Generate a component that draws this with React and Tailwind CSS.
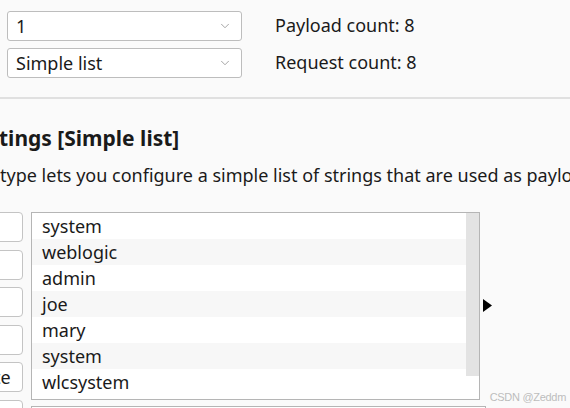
import { ChevronDown } from 'lucide-react';

const items = ['system', 'weblogic', 'admin', 'joe', 'mary', 'system', 'wlcsystem'];
const buttons = ['Paste', 'Load ...', 'Remove', 'Clear', 'Deduplicate', 'Add'];

function Select({ value }) {
  return (
    <div className="w-[235px] h-[30px] flex items-center justify-between pl-[8px] pr-[9px] bg-white border border-[#bdbdbd] rounded-[3px]">
      <span>{value}</span>
      <ChevronDown className="w-[14px] h-[14px] text-[#8a8a8a]" strokeWidth={1.3} />
    </div>
  );
}

export default function App() {
  return (
    <div
      className="relative w-[570px] h-[408px] overflow-hidden bg-[#fafafa] text-[18px] text-[#1a1a1a]"
      style={{ fontFamily: '"Noto Sans", "Open Sans", sans-serif' }}
    >
      {/* payload set / type */}
      <div className="flex items-start gap-[33px] pl-[7px] pt-[11px] h-[97px]">
        <div className="flex flex-col gap-[7px]">
          <Select value="1" />
          <Select value="Simple list" />
        </div>
        <div className="flex flex-col gap-[11px] pt-[1px] leading-[26px]">
          <span>Payload count: 8</span>
          <span>Request count: 8</span>
        </div>
      </div>
      <div className="h-[2px] bg-[#e0e0e0]" />

      {/* settings header */}
      <div className="pt-[25px] whitespace-nowrap">
        <h2 className="text-[21px] font-bold leading-[28px] -ml-[1px]">tings [Simple list]</h2>
        <p className="mt-[10px] leading-[26px]">type lets you configure a simple list of strings that are used as payloads</p>
      </div>

      {/* list editor */}
      <div className="flex items-start gap-[8px] mt-[24px]">
        <div className="flex flex-col gap-[7.5px] -ml-[103px]">
          {buttons.map((b) => (
            <div
              key={b}
              className="w-[126px] h-[30px] flex items-center justify-center bg-white border border-[#c4c4c4] rounded-[4px]"
            >
              {b}
            </div>
          ))}
        </div>
        <div className="flex flex-col gap-[6px]">
          <div className="flex items-center gap-[3px]">
            <div className="w-[449px] h-[188px] bg-white border border-[#b5b5b5] flex">
              <div className="flex-1 flex flex-col">
                {items.map((it, i) => (
                  <div
                    key={i}
                    className={`h-[26px] flex items-center pl-[10px] ${i % 2 === 1 ? 'bg-[#f7f7f7]' : 'bg-white'}`}
                  >
                    {it}
                  </div>
                ))}
              </div>
              <div className="w-[13px] flex flex-col">
                <div className="h-[163px] bg-[#e3e3e3]" />
              </div>
            </div>
            <svg width="9" height="13" viewBox="0 0 9 13" className="mt-[-2px]">
              <polygon points="0,0 9,6.5 0,13" fill="#000" />
            </svg>
          </div>
          <div className="w-[455px] h-[20px] bg-white border border-[#b5b5b5]" />
        </div>
      </div>

      <span
        className="absolute right-[4px] top-[389px] text-[11px] tracking-[-0.3px] text-[#bdbdbd]"
        style={{ fontFamily: '"Liberation Sans", Arial, sans-serif' }}
      >
        CSDN @Zeddm
      </span>
    </div>
  );
}
